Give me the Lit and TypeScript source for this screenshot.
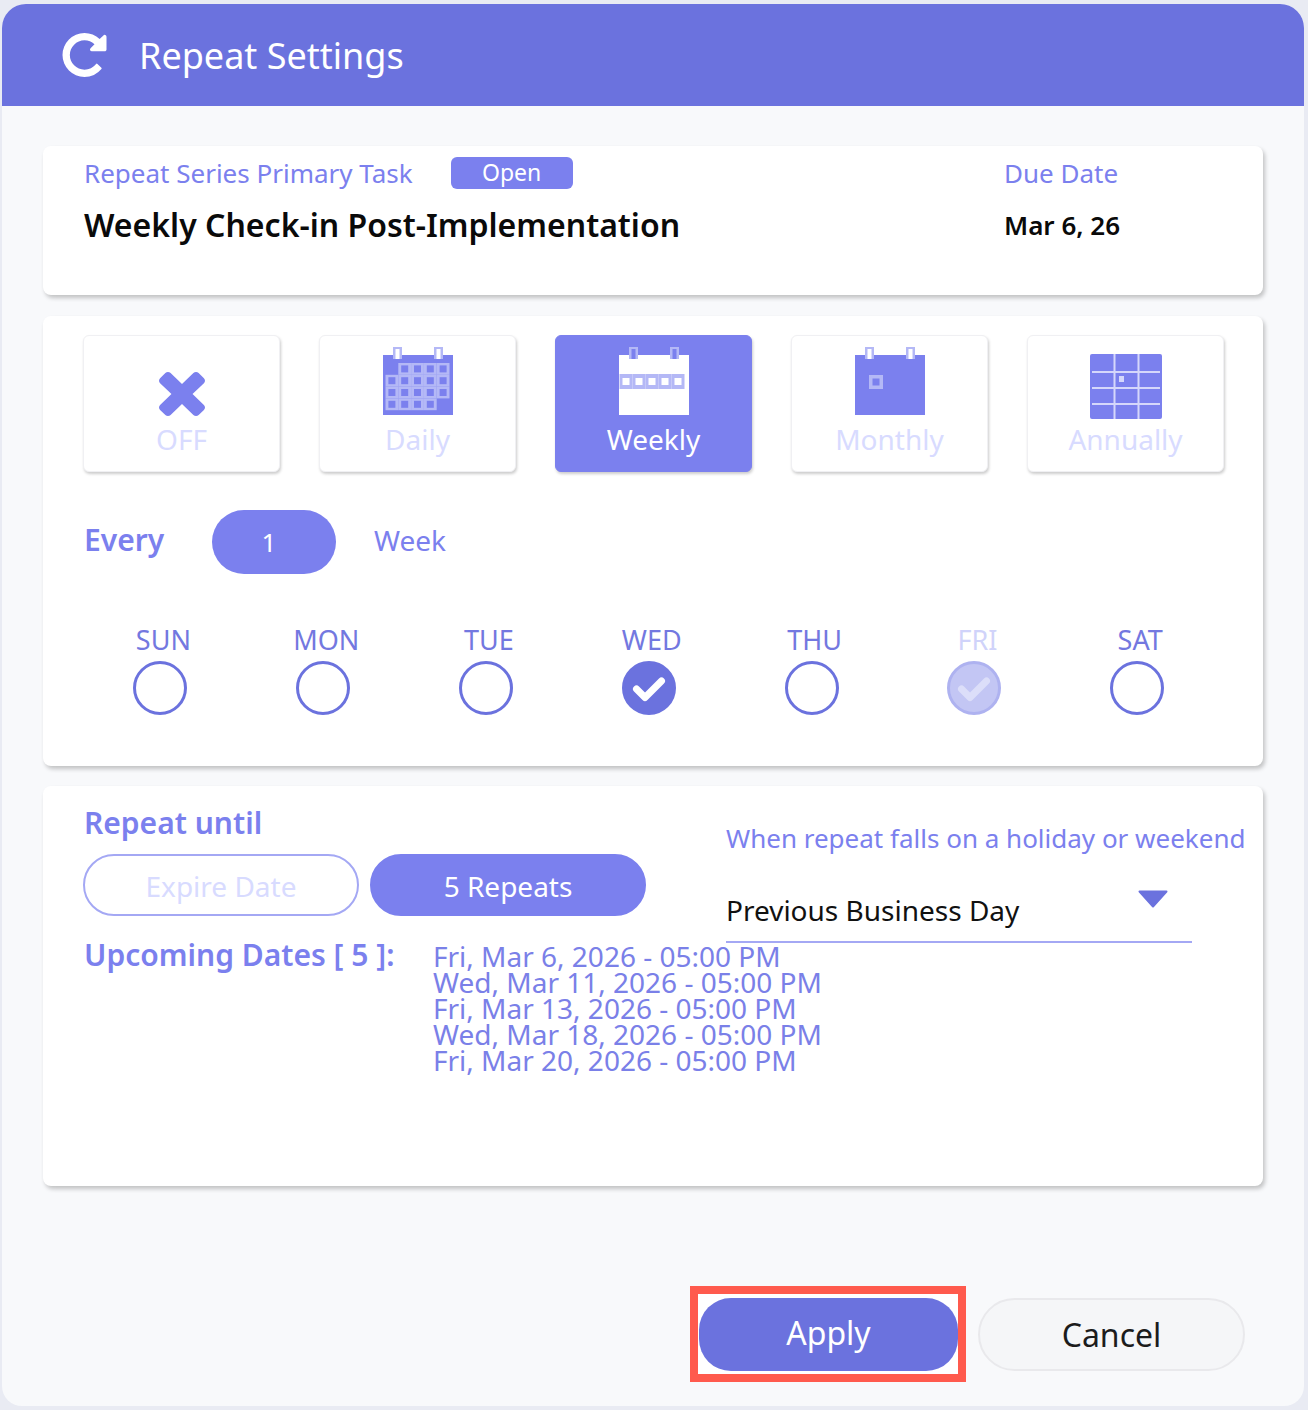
import { LitElement, html, svg, css } from 'lit';
import { customElement } from 'lit/decorators.js';
import { classMap } from 'lit/directives/class-map.js';

const REPEAT_ICON = 'M1536 256v448q0 26-19 45t-45 19h-448q-42 0-59-40-17-39 14-69l138-138q-148-137-349-137-104 0-198.500 40.500t-163.500 109.500-109.500 163.500-40.500 198.500 40.500 198.500 109.500 163.500 163.500 109.500 198.500 40.500q119 0 225-52t179-147q7-10 23-12 15 0 25 9l137 138q9 8 9.500 20.500t-7.500 22.500q-109 132-264 204.500t-327 72.500q-156 0-298-61t-245-164-164-245-61-298 61-298 164-245 245-164 298-61q147 0 284.500 55.500t244.500 156.500l130-129q29-31 70-14 39 17 39 59z';
const TIMES_ICON = 'M1298 1322q0 40-28 68l-136 136q-28 28-68 28t-68-28l-294-294-294 294q-28 28-68 28t-68-28l-136-136q-28-28-28-68t28-68l294-294-294-294q-28-28-28-68t28-68l136-136q28-28 68-28t68 28l294 294 294-294q28-28 68-28t68 28l136 136q28 28 28 68t-28 68l-294 294 294 294q28 28 28 68z';

const PURPLE = '#7b80ee';
const LINE = '#b4b8f6';

// rings + body shared by the three page-style calendars
const calBody = (body: string, ring: string) => svg`
  <rect x="0" y="8" width="70" height="60" fill=${body} />
  <rect x="10" y="0" width="9" height="12" fill=${LINE} />
  <rect x="12.500" y="2" width="4" height="10" fill=${ring} />
  <rect x="51" y="0" width="9" height="12" fill=${LINE} />
  <rect x="53.500" y="2" width="4" height="10" fill=${ring} />
`;

const cell = (x: number, y: number, w: number, h: number, inner: string) => svg`
  <rect x=${x} y=${y} width=${w} height=${h} fill=${LINE} />
  <rect x=${x + w / 2 - 3.5} y=${y + h / 2 - 3.5} width="7" height="7" fill=${inner} />
`;

const dailyIcon = () => {
  const cells = [];
  for (let r = 0; r < 4; r++) {
    for (let c = 0; c < 5; c++) {
      if ((r === 0 && c === 0) || (r === 3 && c === 4)) continue;
      cells.push(cell(2.5 + c * 12.8, 16 + r * 11.8, 12.8, 11.8, PURPLE));
    }
  }
  return html`<svg width="70" height="72" viewBox="0 0 70 72">${calBody(PURPLE, '#ffffff')}${cells}</svg>`;
};

const weeklyIcon = () => {
  const cells = [];
  for (let c = 0; c < 5; c++) cells.push(cell(0.5 + c * 13, 27, 13, 15, '#ffffff'));
  return html`<svg width="70" height="72" viewBox="0 0 70 72">${calBody('#ffffff', PURPLE)}${cells}</svg>`;
};

const monthlyIcon = () => html`<svg width="70" height="72" viewBox="0 0 70 72">
  ${calBody(PURPLE, '#ffffff')}
  <rect x="14" y="28" width="14" height="14" fill=${LINE} />
  <rect x="17.500" y="31.500" width="7" height="7" fill=${PURPLE} />
</svg>`;

const annualIcon = () => html`<svg width="72" height="72" viewBox="0 0 72 72">
  <rect x="0" y="7" width="72" height="65" rx="2" fill=${PURPLE} />
  <rect x="2" y="24" width="68" height="2" fill="#d5d7fb" />
  <rect x="2" y="40" width="68" height="2" fill="#d5d7fb" />
  <rect x="2" y="56" width="68" height="2" fill="#d5d7fb" />
  <rect x="23.500" y="7" width="2" height="65" fill="#d5d7fb" />
  <rect x="47.500" y="7" width="2" height="65" fill="#d5d7fb" />
  <rect x="29" y="29" width="5" height="6" fill="#d5d7fb" />
</svg>`;

const offIcon = () => html`<svg class="off-icon" width="46" height="72" viewBox="0 0 46 72">
  <svg x="0" y="23" width="46" height="46" viewBox="110 310 1188 1244" preserveAspectRatio="none">
    <path d=${TIMES_ICON} fill=${PURPLE} />
  </svg>
</svg>`;

const MODES = [
  { label: 'OFF', icon: offIcon },
  { label: 'Daily', icon: dailyIcon },
  { label: 'Weekly', icon: weeklyIcon, active: true },
  { label: 'Monthly', icon: monthlyIcon },
  { label: 'Annually', icon: annualIcon },
];

const DAYS = [
  { label: 'SUN' },
  { label: 'MON' },
  { label: 'TUE' },
  { label: 'WED', checked: true },
  { label: 'THU' },
  { label: 'FRI', checked: true, disabled: true },
  { label: 'SAT' },
];

const DATES = [
  'Fri, Mar 6, 2026 - 05:00 PM',
  'Wed, Mar 11, 2026 - 05:00 PM',
  'Fri, Mar 13, 2026 - 05:00 PM',
  'Wed, Mar 18, 2026 - 05:00 PM',
  'Fri, Mar 20, 2026 - 05:00 PM',
];

@customElement('app-root')
export class AppRoot extends LitElement {
  static styles = css`
    :host {
      display: block;
      width: 1308px;
      height: 1410px;
      box-sizing: border-box;
      padding: 4px 4px 4px 2px;
      background: #e9ebf3;
      font-family: "Noto Sans", "Open Sans", sans-serif;
      color: #7b80ee;
    }
    .dialog {
      height: 100%;
      display: flex;
      flex-direction: column;
      background: #f8f9fb;
      border-radius: 24px 24px 20px 20px;
      overflow: hidden;
    }
    .header {
      flex: none;
      height: 102px;
      display: flex;
      align-items: center;
      padding-left: 60px;
      gap: 32px;
      background: #6b72de;
      color: #fff;
      font-size: 36px;
    }
    .header svg {
      display: block;
    }
    .body {
      display: flex;
      flex-direction: column;
      gap: 20px;
      padding: 40px 41px 0;
    }
    .card {
      background: #fff;
      border-radius: 8px;
      box-shadow: 2px 3px 4px rgba(0, 0, 0, 0.22);
      box-sizing: border-box;
    }
    .task {
      height: 149px;
      display: flex;
      padding: 9px 0 0 41px;
      margin-bottom: 1px;
    }
    .task-main {
      flex: 1;
    }
    .task-due {
      width: 259px;
    }
    .label-row {
      display: flex;
      align-items: center;
      gap: 38px;
      height: 36px;
      font-size: 26px;
      line-height: 36px;
    }
    .badge {
      width: 122px;
      height: 32px;
      border-radius: 6px;
      background: #7b80ee;
      color: #fff;
      font-size: 23px;
      line-height: 30px;
      text-align: center;
    }
    .task-title {
      margin-top: 12px;
      font-size: 32px;
      line-height: 44px;
      font-weight: 600;
      color: #0a0a0a;
    }
    .task-date {
      margin-top: 12px;
      font-size: 26px;
      line-height: 44px;
      font-weight: 600;
      color: #0a0a0a;
    }
    .schedule {
      height: 450px;
      padding: 19px 0 0 40px;
    }
    .modes {
      display: flex;
      gap: 39px;
    }
    .mode {
      width: 197px;
      height: 137px;
      box-sizing: border-box;
      padding-top: 11px;
      display: flex;
      flex-direction: column;
      align-items: center;
      background: #fff;
      border: 1px solid #f0f0f3;
      border-radius: 6px;
      box-shadow: 1px 2px 3px rgba(0, 0, 0, 0.2);
      color: #d8dbff;
      font-size: 28px;
      line-height: 40px;
    }
    .mode svg {
      display: block;
    }
    .mode.active {
      background: #7b80ee;
      border-color: #7b80ee;
      color: #fff;
    }
    .every {
      display: flex;
      align-items: center;
      height: 64px;
      margin: 38px 0 0 1px;
      font-size: 28px;
    }
    .every-label {
      width: 128px;
      font-size: 30px;
      font-weight: 600;
      margin-top: -6px;
    }
    .every-value {
      width: 124px;
      height: 64px;
      border-radius: 32px;
      background: #7b80ee;
      color: #fff;
      font-size: 26px;
      line-height: 64px;
      padding-right: 10px;
      box-sizing: border-box;
      text-align: center;
    }
    .every-unit {
      margin-left: 38px;
      margin-top: -4px;
    }
    .days {
      display: grid;
      grid-template-columns: repeat(7, 162.800px);
      margin: 48px 0 0 -4px;
    }
    .day {
      display: flex;
      flex-direction: column;
      align-items: center;
      color: #7378e0;
      font-size: 27px;
      line-height: 36px;
    }
    .day-label {
      transform: translateX(3px);
    }
    .day.disabled {
      color: #d0d3fa;
    }
    .day-check {
      display: block;
      margin-top: 3px;
    }
    .until {
      height: 400px;
      padding: 17px 0 0 40px;
    }
    .until-top {
      display: flex;
    }
    .until-left {
      width: 643px;
    }
    .section-label {
      font-size: 30px;
      line-height: 40px;
      font-weight: 600;
      padding-left: 1px;
    }
    .pills {
      display: flex;
      gap: 11px;
      margin-top: 11px;
    }
    .pill {
      width: 276px;
      height: 62px;
      box-sizing: border-box;
      border: 2px solid #a4a8f4;
      border-radius: 31px;
      color: #d8dbff;
      font-size: 28px;
      line-height: 60px;
      text-align: center;
    }
    .pill.active {
      background: #7b80ee;
      border-color: #7b80ee;
      color: #fff;
    }
    .until-right {
      padding-top: 17px;
      width: 520px;
    }
    .holiday {
      font-size: 26px;
      line-height: 36px;
      white-space: nowrap;
    }
    .select {
      width: 466px;
      height: 87px;
      box-sizing: border-box;
      display: flex;
      justify-content: space-between;
      padding: 0 24px 13px 0;
      border-bottom: 2px solid #a4a8f4;
      color: #111;
      font-size: 28px;
      line-height: 36px;
    }
    .select span {
      align-self: flex-end;
    }
    .select svg {
      display: block;
      margin-top: 34px;
    }
    .upcoming {
      display: flex;
      margin-top: -8px;
    }
    .upcoming .section-label {
      width: 349px;
      white-space: nowrap;
    }
    .dates {
      margin-top: 8px;
      color: #7a80e8;
      font-size: 28px;
      line-height: 26px;
    }
    .footer {
      display: flex;
      justify-content: flex-end;
      align-items: center;
      gap: 12px;
      margin-top: 100px;
      padding-right: 59px;
    }
    .highlight {
      box-sizing: border-box;
      width: 276px;
      height: 96px;
      padding: 4px 0 3px 1px;
      border: 8px solid #ff5a4d;
      background: #fff;
    }
    .apply {
      height: 100%;
      border-radius: 32px;
      background: #6b72de;
      color: #fff;
      font-size: 32px;
      line-height: 70px;
      text-align: center;
    }
    .cancel {
      width: 267px;
      height: 73px;
      box-sizing: border-box;
      border: 2px solid #e9e9ec;
      border-radius: 37px;
      background: #f5f6f8;
      color: #1c1c1c;
      font-size: 32px;
      line-height: 69px;
      text-align: center;
    }
  `;

  private renderCheck(checked?: boolean, disabled?: boolean) {
    const accent = disabled ? '#aeb2f0' : '#6b72de';
    const fill = checked ? (disabled ? '#c3c6f4' : '#6b72de') : '#fff';
    return html`<svg class="day-check" width="54" height="54" viewBox="0 0 54 54">
      <circle cx="27" cy="27" r="25.500" fill=${fill} stroke=${accent} stroke-width="3" />
      ${checked
        ? svg`<path d="M14.500 28 L23 36.500 L39.500 20" fill="none" stroke=${disabled ? '#dcdef9' : '#fff'}
            stroke-width="7" stroke-linecap="round" stroke-linejoin="round" />`
        : null}
    </svg>`;
  }

  render() {
    return html`
      <div class="dialog">
        <div class="header">
          <svg width="45" height="44" viewBox="0 128 1536 1536">
            <path d=${REPEAT_ICON} fill="#fff" />
          </svg>
          <span>Repeat Settings</span>
        </div>
        <div class="body">
          <div class="card task">
            <div class="task-main">
              <div class="label-row">
                <span>Repeat Series Primary Task</span>
                <span class="badge">Open</span>
              </div>
              <div class="task-title">Weekly Check-in Post-Implementation</div>
            </div>
            <div class="task-due">
              <div class="label-row">Due Date</div>
              <div class="task-date">Mar 6, 26</div>
            </div>
          </div>

          <div class="card schedule">
            <div class="modes">
              ${MODES.map(
                (m) => html`<div class=${classMap({ mode: true, active: !!m.active })}>
                  ${m.icon()}
                  <span>${m.label}</span>
                </div>`
              )}
            </div>
            <div class="every">
              <span class="every-label">Every</span>
              <span class="every-value">1</span>
              <span class="every-unit">Week</span>
            </div>
            <div class="days">
              ${DAYS.map(
                (d) => html`<div class=${classMap({ day: true, disabled: !!d.disabled })}>
                  <span class="day-label">${d.label}</span>
                  ${this.renderCheck(d.checked, d.disabled)}
                </div>`
              )}
            </div>
          </div>

          <div class="card until">
            <div class="until-top">
              <div class="until-left">
                <div class="section-label">Repeat until</div>
                <div class="pills">
                  <div class="pill">Expire Date</div>
                  <div class="pill active">5 Repeats</div>
                </div>
              </div>
              <div class="until-right">
                <div class="holiday">When repeat falls on a holiday or weekend</div>
                <div class="select">
                  <span>Previous Business Day</span>
                  <svg width="30" height="18" viewBox="0 0 30 18">
                    <path d="M1.500 1.500 H28.500 L15 16.500 Z" fill="#6b72de" stroke="#6b72de" stroke-width="2" stroke-linejoin="round" />
                  </svg>
                </div>
              </div>
            </div>
            <div class="upcoming">
              <div class="section-label">Upcoming Dates [ 5 ]:</div>
              <div class="dates">
                ${DATES.map((d) => html`<div>${d}</div>`)}
              </div>
            </div>
          </div>
        </div>
        <div class="footer">
          <div class="highlight"><div class="apply">Apply</div></div>
          <div class="cancel">Cancel</div>
        </div>
      </div>
    `;
  }
}
